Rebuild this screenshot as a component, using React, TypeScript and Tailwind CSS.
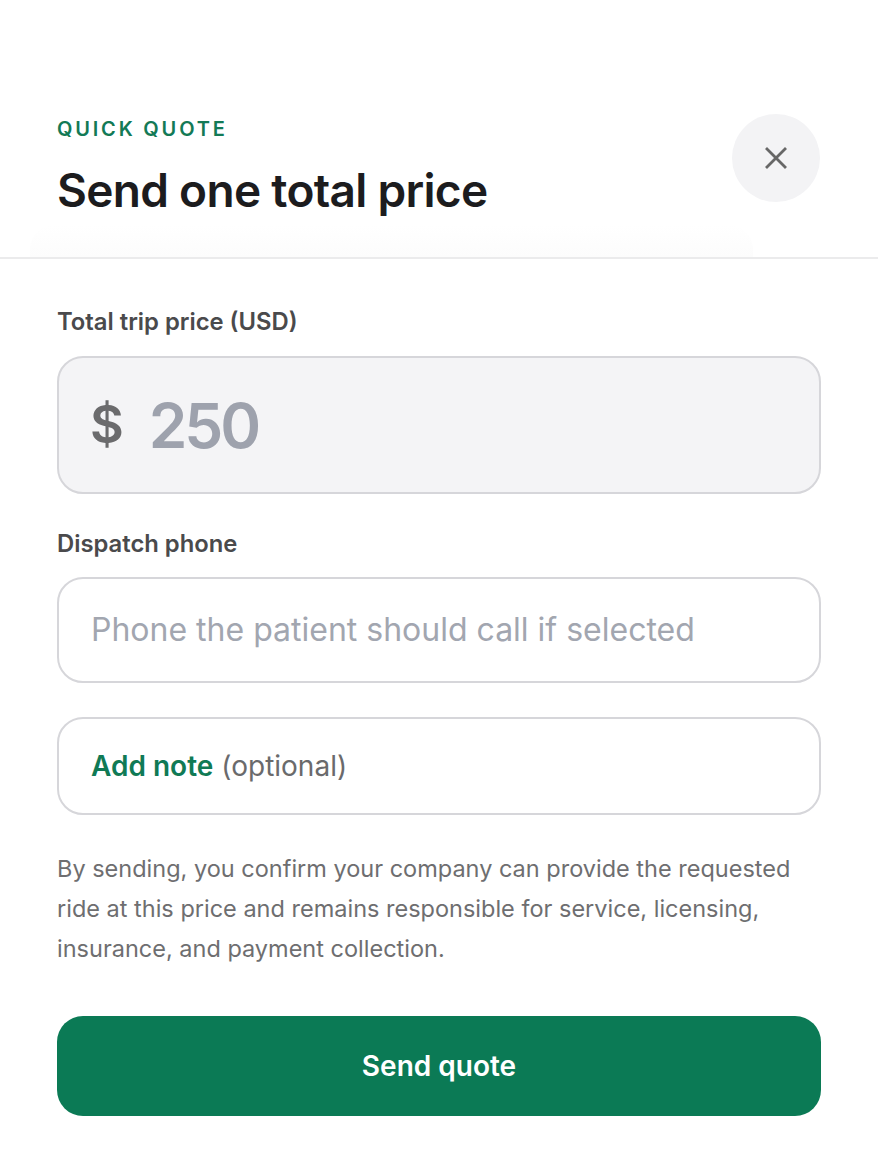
import React from 'react';

const App: React.FC = () => {
  return (
    <div className="min-h-[1156px] w-full bg-white" style={{ fontFamily: 'Inter, "Noto Sans", sans-serif' }}>
      {/* Header */}
      <div className="relative border-b-2 border-[#ebebec] px-[57px] pt-[116px] pb-[39px]">
        <p className="text-[20px] font-semibold uppercase leading-[26px] tracking-[0.14em] text-[#137a56]">Quick quote</p>
        <h2 className="mt-[20px] text-[46px] font-semibold leading-[56px] tracking-[-0.015em] text-[#1c1c1e]">Send one total price</h2>
        <div className="pointer-events-none absolute bottom-0 left-[30px] right-[125px] h-[32px] rounded-t-[24px] bg-gradient-to-b from-white to-[#fcfcfc]" />
        <button className="absolute right-[58px] top-[114px] flex h-[88px] w-[88px] items-center justify-center rounded-full bg-[#f3f3f5]">
          <svg width="24" height="24" viewBox="0 0 24 24" fill="none" stroke="#676767" strokeWidth="2.8" strokeLinecap="square">
            <path d="M3 3L21 21M21 3L3 21" />
          </svg>
        </button>
      </div>

      {/* Body */}
      <div className="px-[57px] pt-[48px]">
        <label className="block text-[23.8px] font-semibold leading-[30px] text-[#4a4a4c]">Total trip price (USD)</label>
        <div className="mt-[19px] flex h-[138px] items-center rounded-[26px] border-2 border-[#d6d6da] bg-[#f4f4f6] px-[31px]">
          <span className="text-[52px] font-semibold text-[#6b6b6d]">$</span>
          <span className="ml-[25px] text-[62px] font-semibold tracking-[-0.05em] text-[#9ea2ad]">250</span>
        </div>

        <label className="mt-[35px] block text-[23.8px] font-semibold leading-[30px] text-[#4a4a4c]">Dispatch phone</label>
        <div className="mt-[18px] flex h-[106px] items-center rounded-[26px] border-2 border-[#d6d6da] bg-white px-[32px]">
          <span className="text-[32px] text-[#a2a6b0]">Phone the patient should call if selected</span>
        </div>

        <div className="mt-[34px] flex h-[98px] items-center rounded-[26px] border-2 border-[#d6d6da] bg-white px-[32px]">
          <span className="text-[28px] font-semibold text-[#107a55]">Add note</span>
          <span className="ml-[8px] text-[28px] text-[#6a6a6c]">(optional)</span>
        </div>

        <p className="mt-[34px] text-[23.5px] leading-[40px] text-[#6e6e70]">
          By sending, you confirm your company can provide the requested ride at this price and remains responsible for service, licensing, insurance, and payment collection.
        </p>

        <button className="mt-[47px] flex h-[100px] w-full items-center justify-center rounded-[26px] bg-[#0b7a55] text-[28px] font-semibold text-white">
          Send quote
        </button>
      </div>
    </div>
  );
};

export default App;
